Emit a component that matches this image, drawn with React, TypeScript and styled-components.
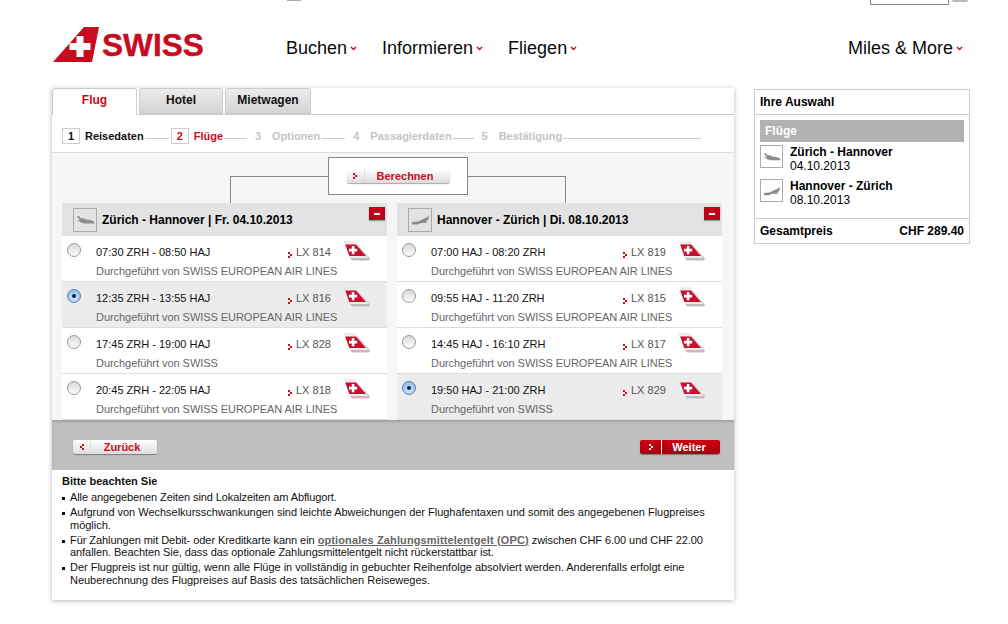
import React from 'react';
import styled, { createGlobalStyle } from 'styled-components';

const GlobalStyle = createGlobalStyle`
  html, body {
    margin: 0;
    padding: 0;
    background: #fff;
    font-family: "Liberation Sans", Arial, sans-serif;
    color: #000;
  }
`;

const Page = styled.div`
  width: 1008px;
  height: 624px;
  overflow: hidden;
`;

const TopStrip = styled.div`
  height: 5px;
  display: flex;
  align-items: flex-start;
`;

const StubCheck = styled.div`
  width: 14px;
  height: 1px;
  margin-left: 287px;
  background: #aaa;
`;

const StubInput = styled.div`
  width: 77px;
  height: 4px;
  margin-left: 569px;
  border: 1px solid #888;
  border-top: 0;
`;

const StubButton = styled.div`
  width: 16px;
  height: 2px;
  margin-left: 3px;
  background: #bbb;
  border-radius: 0 0 3px 3px;
`;

const Header = styled.header`
  height: 83px;
  display: flex;
  align-items: flex-start;
  padding-left: 53px;
`;

const LogoBlock = styled.div`
  width: 150px;
  height: 35px;
  margin-top: 22px;
  flex: none;
  display: flex;
  align-items: flex-start;
  gap: 2px;
`;

const LogoFlag = styled.svg`
  width: 47px;
  height: 35px;
  flex: none;
`;

const LogoWord = styled.span`
  font-weight: 700;
  font-size: 31.6px;
  line-height: 35px;
  margin-top: 1px;
  color: #c60c1e;
  -webkit-text-stroke: 0.4px #c60c1e;
`;

const Nav = styled.nav`
  display: flex;
  width: 677px;
  margin-left: 83px;
  margin-top: 33px;
  font-size: 18px;
  line-height: 20px;
`;

const NavItem = styled.div<{ $push?: boolean }>`
  display: flex;
  align-items: center;
  gap: 3px;
  margin-right: 25px;
  margin-left: ${(p) => (p.$push ? 'auto' : '0')};
  color: #0a0a0a;

  &:last-child {
    margin-right: 0;
  }
`;

const Layout = styled.div`
  display: flex;
  align-items: flex-start;
  gap: 20px;
  padding-left: 52px;
`;

const MainCard = styled.main`
  width: 682px;
  height: 512px;
  background: #fff;
  box-shadow: 0 1px 5px rgba(0, 0, 0, 0.28);
  display: flex;
  flex-direction: column;
`;

const Tabs = styled.div`
  height: 26px;
  display: flex;
  gap: 2px;
  border-bottom: 1px solid #ccc;
`;

const Tab = styled.div<{ $active?: boolean; $w: number }>`
  width: ${(p) => p.$w}px;
  height: ${(p) => (p.$active ? '27px' : '26px')};
  box-sizing: border-box;
  border: 1px solid #ccc;
  border-bottom: ${(p) => (p.$active ? '0' : '1px solid #ccc')};
  border-radius: 3px 3px 0 0;
  background: ${(p) => (p.$active ? '#fff' : 'linear-gradient(#ececec, #d4d4d4)')};
  color: ${(p) => (p.$active ? '#cc0a1a' : '#111')};
  font-size: 12px;
  font-weight: 700;
  text-align: center;
  line-height: 23px;
`;

const Steps = styled.div`
  height: 38px;
  box-sizing: border-box;
  padding: 13px 0 0 10px;
  display: flex;
  align-items: flex-start;
  border-bottom: 1px solid #ddd;
`;

const Step = styled.div<{ $state: 'done' | 'current' | 'todo' }>`
  display: flex;
  align-items: center;
  height: 16px;
  font-size: 11px;
  font-weight: 700;
  color: ${(p) => (p.$state === 'done' ? '#111' : p.$state === 'current' ? '#cc0a1a' : '#c4c4c4')};
`;

const StepNum = styled.span<{ $boxed?: boolean }>`
  width: 18px;
  height: 16px;
  box-sizing: border-box;
  margin-right: 5px;
  text-align: center;
  line-height: 14px;
  border: 1px solid ${(p) => (p.$boxed ? '#ccc' : 'transparent')};
`;

const StepLine = styled.span<{ $w: number }>`
  width: ${(p) => p.$w}px;
  height: 1px;
  margin: 10px 2px 0 1px;
  background: #ccc;
`;

const Results = styled.section`
  height: 267px;
  overflow: hidden;
  background: #f6f6f6;
  padding: 0 10px;
  box-sizing: border-box;
`;

const ConnectorRow = styled.div`
  height: 50px;
  padding-left: 168px;
  display: flex;
  align-items: flex-start;
`;

const Arm = styled.div<{ $side: 'left' | 'right' }>`
  width: 98px;
  height: 27px;
  margin-top: 23px;
  box-sizing: border-box;
  border-top: 1px solid #888;
  border-${(p) => p.$side}: 1px solid #888;
`;

const CalcBox = styled.div`
  width: 140px;
  height: 38px;
  margin-top: 4px;
  box-sizing: border-box;
  background: #fff;
  border: 1px solid #888;
  display: flex;
  align-items: center;
  justify-content: center;
`;

const ActionButton = styled.div<{ $w: number; $primary?: boolean }>`
  width: ${(p) => p.$w}px;
  height: 14px;
  display: flex;
  border-radius: 2px;
  font-size: 11px;
  font-weight: 700;
  line-height: 14px;
  color: ${(p) => (p.$primary ? '#fff' : '#cc0a1a')};
  background: ${(p) => (p.$primary ? 'linear-gradient(#d0000f, #a50010)' : 'linear-gradient(#ffffff, #dcdcdc)')};
  box-shadow: 0 1px 1px rgba(0, 0, 0, 0.35);
`;

const ButtonIcon = styled.span<{ $primary?: boolean }>`
  width: ${(p) => (p.$primary ? '22px' : '18px')};
  flex: none;
  display: flex;
  align-items: center;
  justify-content: center;
  box-sizing: border-box;
  border-right: 1px solid ${(p) => (p.$primary ? '#fff' : '#ddd')};
`;

const ButtonLabel = styled.span`
  flex: 1;
  text-align: center;
  padding-right: 4px;
`;

const Columns = styled.div`
  display: flex;
  gap: 10px;
`;

const Column = styled.div`
  width: 325px;
`;

const ColumnHead = styled.div`
  height: 33px;
  background: #e3e3e3;
  display: flex;
  align-items: center;
  padding-left: 11px;
  gap: 5px;
  position: relative;
  font-size: 12px;
  font-weight: 700;
`;

const PlaneBox = styled.span`
  width: 24px;
  height: 24px;
  flex: none;
  box-sizing: border-box;
  border: 1px solid #aaa;
  display: flex;
  align-items: center;
  justify-content: center;
`;

const Collapse = styled.span`
  position: absolute;
  top: 4px;
  right: 2px;
  width: 16px;
  height: 13px;
  background: #c0001a;
  box-shadow: 0 1px 1px rgba(0, 0, 0, 0.3);
  display: flex;
  align-items: center;
  justify-content: center;

  &::after {
    content: '';
    width: 6px;
    height: 2px;
    background: #fff;
  }
`;

const FlightRow = styled.div<{ $selected?: boolean }>`
  height: 46px;
  box-sizing: border-box;
  background: ${(p) => (p.$selected ? '#ececec' : '#fff')};
  border-bottom: 1px solid #ddd;
  display: grid;
  grid-template-columns: 34px 191px 57px 1fr;
  grid-template-rows: 25px 20px;
  font-size: 11px;
`;

const RadioCell = styled.div`
  padding: 7px 0 0 5px;
`;

const Radio = styled.span<{ $on?: boolean }>`
  display: flex;
  align-items: center;
  justify-content: center;
  width: 14px;
  height: 14px;
  box-sizing: border-box;
  border-radius: 50%;
  border: 1px solid ${(p) => (p.$on ? '#5a7fa8' : '#999')};
  background: ${(p) =>
    p.$on ? 'radial-gradient(circle at 50% 70%, #cfe6ff, #7fb3ea)' : 'linear-gradient(#d8d8d8, #fdfdfd)'};

  &::after {
    content: '';
    display: ${(p) => (p.$on ? 'block' : 'none')};
    width: 4px;
    height: 4px;
    border-radius: 50%;
    background: #123;
  }
`;

const Times = styled.div`
  padding-top: 10px;
  line-height: 13px;
  color: #111;
`;

const FlightNo = styled.div`
  padding: 10px 0 0 1px;
  height: 13px;
  line-height: 13px;
  color: #555;
  display: flex;
  align-items: center;
  gap: 4px;
`;

const ArrowDrop = styled.span`
  display: flex;
  margin-top: 4px;
`;

const TailCell = styled.div`
  padding-top: 5px;
`;

const Operator = styled.div`
  grid-column: 2 / 5;
  line-height: 13px;
  padding-top: 4px;
  color: #666;
  letter-spacing: -0.05px;
`;

const ActionBar = styled.div`
  height: 50px;
  box-sizing: border-box;
  padding: 4px 14px 0 21px;
  background: #bfbfbf;
  box-shadow: inset 0 2px 2px rgba(0, 0, 0, 0.15);
  display: flex;
  align-items: center;
  justify-content: space-between;
`;

const Notes = styled.section`
  padding: 5px 24px 0 10px;
  font-size: 11px;
  line-height: 12.5px;
  color: #111;
`;

const NotesTitle = styled.div`
  font-weight: 700;
  line-height: 13px;
  margin-bottom: 3px;
`;

const NoteList = styled.ul`
  list-style: none;
  margin: 0;
  padding: 0;
`;

const NoteItem = styled.li<{ $spacing: number }>`
  position: relative;
  padding-left: 8px;
  margin-bottom: 2.5px;
  letter-spacing: ${(p) => p.$spacing}px;

  &::before {
    content: '';
    position: absolute;
    left: 0;
    top: 6px;
    width: 3px;
    height: 3px;
    background: #111;
  }
`;

const NoteLink = styled.span`
  font-weight: 700;
  letter-spacing: 0.12px;
  color: #666;
  text-decoration: underline;
`;

const Sidebar = styled.aside`
  width: 216px;
  margin-top: 1px;
  box-sizing: border-box;
  border: 1px solid #ccc;
  font-size: 12px;
`;

const SideTitle = styled.div`
  height: 24px;
  padding-left: 5px;
  font-weight: 700;
  line-height: 24px;
  border-bottom: 1px solid #ccc;
`;

const SideBody = styled.div`
  padding: 5px 5px 8px;
  border-bottom: 1px solid #ccc;
`;

const SideBand = styled.div`
  height: 22px;
  padding-left: 5px;
  background: #b2b2b2;
  color: #fff;
  font-weight: 700;
  line-height: 22px;
`;

const SideFlight = styled.div`
  display: flex;
  gap: 7px;
  margin-top: 3px;
  height: 31px;
`;

const SidePlane = styled(PlaneBox)`
  width: 23px;
  height: 23px;
`;

const SideText = styled.div`
  line-height: 14px;
`;

const SideRoute = styled.div`
  font-weight: 700;
`;

const SideTotal = styled.div`
  height: 24px;
  padding: 0 5px;
  display: flex;
  justify-content: space-between;
  align-items: center;
  font-weight: 700;
`;

const NavChevron = () => (
  <svg width="7" height="5" viewBox="0 0 7 5">
    <path d="M1 1 L3.5 3.6 L6 1" fill="none" stroke="#c60c1e" strokeWidth="1.4" />
  </svg>
);

// the little pixel arrow used on buttons and next to flight numbers
const Arrow = ({ color = '#c60c1e', back = false }: { color?: string; back?: boolean }) => (
  <svg width="4" height="6" viewBox="0 0 4 6" style={back ? { transform: 'scaleX(-1)' } : undefined}>
    <rect x="0" y="0" width="2" height="2" fill={color} />
    <rect x="2" y="2" width="2" height="2" fill={color} />
    <rect x="0" y="4" width="2" height="2" fill={color} />
  </svg>
);

const PlaneIcon = ({ up = false }: { up?: boolean }) => (
  <svg width="22" height="22" viewBox="0 0 22 22">
    {up ? (
      <path
        d="M3 13 L9 12.5 L14 10 L17 9 L19.5 6.5 L19.5 10.5 L17 12.5 L18 14 L12 14 L8 15.5 L3 15.5 Z"
        fill="#8c8c8c"
      />
    ) : (
      <path
        d="M3 7 L5 7 L7 9.5 L9 9 L12 10.5 L16 11 L20 12.5 L20.5 14.5 L10 14.5 L6 13 L3 11 L6 11.5 Z"
        fill="#8c8c8c"
      />
    )}
  </svg>
);

const TailIcon = () => (
  <svg width="26" height="20" viewBox="0 0 26 20">
    <path d="M0 0 L10 0 L26 17.5 L25 19.5 L8 19.5 L6 17 Z" fill="#bdbdbd" />
    <path d="M0 0 L10 0 L24.5 17 L6 17 Z" fill="#ececec" />
    <path d="M1.2 3.6 L12 3.6 L22 15 L5.4 15 Z" fill="#c8102e" />
    <path d="M7.8 5 H10.4 V7.8 H13.2 V10.4 H10.4 V13.2 H7.8 V10.4 H5 V7.8 H7.8 Z" fill="#fff" />
  </svg>
);

const Flight = ({ times, no, operator, selected }: { times: string; no: string; operator: string; selected?: boolean }) => (
  <FlightRow $selected={selected}>
    <RadioCell>
      <Radio $on={selected} />
    </RadioCell>
    <Times>{times}</Times>
    <FlightNo>
      <ArrowDrop><Arrow /></ArrowDrop>
      {no}
    </FlightNo>
    <TailCell>
      <TailIcon />
    </TailCell>
    <Operator>Durchgeführt von {operator}</Operator>
  </FlightRow>
);

const EUROPEAN = 'SWISS EUROPEAN AIR LINES';

const outbound = [
  { times: '07:30 ZRH - 08:50 HAJ', no: 'LX 814', operator: EUROPEAN },
  { times: '12:35 ZRH - 13:55 HAJ', no: 'LX 816', operator: EUROPEAN, selected: true },
  { times: '17:45 ZRH - 19:00 HAJ', no: 'LX 828', operator: 'SWISS' },
  { times: '20:45 ZRH - 22:05 HAJ', no: 'LX 818', operator: EUROPEAN },
];

const inbound = [
  { times: '07:00 HAJ - 08:20 ZRH', no: 'LX 819', operator: EUROPEAN },
  { times: '09:55 HAJ - 11:20 ZRH', no: 'LX 815', operator: EUROPEAN },
  { times: '14:45 HAJ - 16:10 ZRH', no: 'LX 817', operator: EUROPEAN },
  { times: '19:50 HAJ - 21:00 ZRH', no: 'LX 829', operator: 'SWISS', selected: true },
];

const App: React.FC = () => (
  <Page>
    <GlobalStyle />
    <TopStrip>
      <StubCheck />
      <StubInput />
      <StubButton />
    </TopStrip>
    <Header>
      <LogoBlock>
        <LogoFlag viewBox="0 0 47 35">
          <path d="M31 0 H46 L39 35 H0 Z" fill="#c60c1e" />
          <path d="M23.5 9 H30.5 V16 H37.5 V23 H30.5 V30 H23.5 V23 H16.5 V16 H23.5 Z" fill="#fff" />
        </LogoFlag>
        <LogoWord>SWISS</LogoWord>
      </LogoBlock>
      <Nav>
        <NavItem>Buchen<NavChevron /></NavItem>
        <NavItem>Informieren<NavChevron /></NavItem>
        <NavItem>Fliegen<NavChevron /></NavItem>
        <NavItem $push>Miles &amp; More<NavChevron /></NavItem>
      </Nav>
    </Header>
    <Layout>
      <MainCard>
        <Tabs>
          <Tab $active $w={85}>Flug</Tab>
          <Tab $w={84}>Hotel</Tab>
          <Tab $w={86}>Mietwagen</Tab>
        </Tabs>
        <Steps>
          <Step $state="done"><StepNum $boxed>1</StepNum>Reisedaten</Step>
          <StepLine $w={24} />
          <Step $state="current"><StepNum $boxed>2</StepNum>Flüge</Step>
          <StepLine $w={23} />
          <Step $state="todo"><StepNum>3</StepNum>Optionen</Step>
          <StepLine $w={24} />
          <Step $state="todo"><StepNum>4</StepNum>Passagierdaten</Step>
          <StepLine $w={21} />
          <Step $state="todo"><StepNum>5</StepNum>Bestätigung</Step>
          <StepLine $w={138} />
        </Steps>
        <Results>
          <ConnectorRow>
            <Arm $side="left" />
            <CalcBox>
              <ActionButton $w={103}>
                <ButtonIcon><Arrow /></ButtonIcon>
                <ButtonLabel>Berechnen</ButtonLabel>
              </ActionButton>
            </CalcBox>
            <Arm $side="right" />
          </ConnectorRow>
          <Columns>
            <Column>
              <ColumnHead>
                <PlaneBox><PlaneIcon /></PlaneBox>
                Zürich - Hannover | Fr. 04.10.2013
                <Collapse />
              </ColumnHead>
              {outbound.map((f) => <Flight key={f.no} {...f} />)}
            </Column>
            <Column>
              <ColumnHead>
                <PlaneBox><PlaneIcon up /></PlaneBox>
                Hannover - Zürich | Di. 08.10.2013
                <Collapse />
              </ColumnHead>
              {inbound.map((f) => <Flight key={f.no} {...f} />)}
            </Column>
          </Columns>
        </Results>
        <ActionBar>
          <ActionButton $w={84}>
            <ButtonIcon><Arrow back /></ButtonIcon>
            <ButtonLabel>Zurück</ButtonLabel>
          </ActionButton>
          <ActionButton $w={80} $primary>
            <ButtonIcon $primary><Arrow color="#fff" /></ButtonIcon>
            <ButtonLabel>Weiter</ButtonLabel>
          </ActionButton>
        </ActionBar>
        <Notes>
          <NotesTitle>Bitte beachten Sie</NotesTitle>
          <NoteList>
            <NoteItem $spacing={-0.1}>Alle angegebenen Zeiten sind Lokalzeiten am Abflugort.</NoteItem>
            <NoteItem $spacing={-0.02}>Aufgrund von Wechselkursschwankungen sind leichte Abweichungen der Flughafentaxen und somit des angegebenen Flugpreises möglich.</NoteItem>
            <NoteItem $spacing={-0.06}>Für Zahlungen mit Debit- oder Kreditkarte kann ein <NoteLink>optionales Zahlungsmittelentgelt (OPC)</NoteLink> zwischen CHF 6.00 und CHF 22.00 anfallen. Beachten Sie, dass das optionale Zahlungsmittelentgelt nicht rückerstattbar ist.</NoteItem>
            <NoteItem $spacing={-0.02}>Der Flugpreis ist nur gültig, wenn alle Flüge in vollständig in gebuchter Reihenfolge absolviert werden. Anderenfalls erfolgt eine Neuberechnung des Flugpreises auf Basis des tatsächlichen Reiseweges.</NoteItem>
          </NoteList>
        </Notes>
      </MainCard>
      <Sidebar>
        <SideTitle>Ihre Auswahl</SideTitle>
        <SideBody>
          <SideBand>Flüge</SideBand>
          <SideFlight>
            <SidePlane><PlaneIcon /></SidePlane>
            <SideText>
              <SideRoute>Zürich - Hannover</SideRoute>
              04.10.2013
            </SideText>
          </SideFlight>
          <SideFlight>
            <SidePlane><PlaneIcon up /></SidePlane>
            <SideText>
              <SideRoute>Hannover - Zürich</SideRoute>
              08.10.2013
            </SideText>
          </SideFlight>
        </SideBody>
        <SideTotal>
          <span>Gesamtpreis</span>
          <span>CHF 289.40</span>
        </SideTotal>
      </Sidebar>
    </Layout>
  </Page>
);

export default App;
